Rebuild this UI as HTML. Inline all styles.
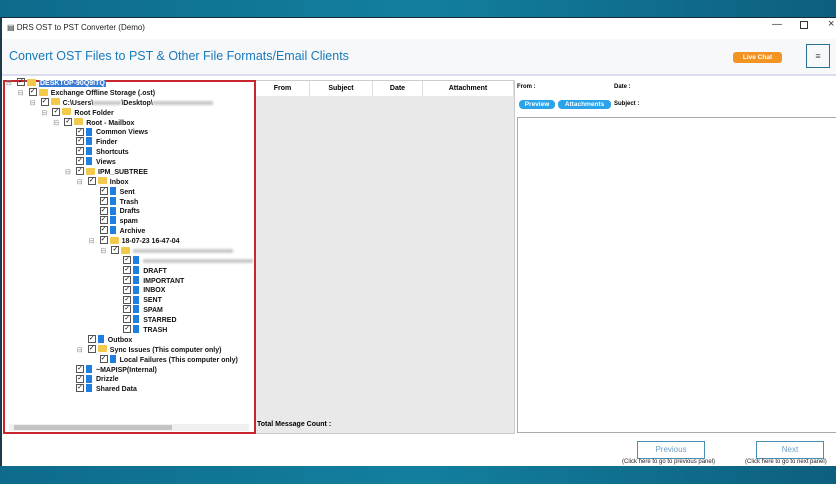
<!DOCTYPE html>
<html><head><meta charset="utf-8"><style>
*{margin:0;padding:0;box-sizing:border-box}
body{width:836px;height:484px;overflow:hidden;position:relative;font-family:"Liberation Sans",sans-serif;background:linear-gradient(90deg,#0e6b8c,#137f9f 50%,#0d5f7e)}
.win{position:absolute;left:0;top:17px;width:836px;height:449px;background:#fff;border-left:2px solid #1b3a4a;border-top:1px solid #1a2b36}
.a{position:absolute}
.row{position:absolute;height:10px;font-size:7px;font-weight:bold;line-height:10px;white-space:nowrap;color:#111}
.cb{display:inline-block;width:8px;height:8px;border:1px solid #555;vertical-align:middle;margin-right:2px;position:relative;top:-1px;font-size:7px;line-height:6px;text-align:center;font-weight:normal}
.fd{display:inline-block;width:9px;height:7px;background:#f3c94a;vertical-align:middle;margin-right:3px;position:relative;top:-1px;border-radius:1px}
.bl{display:inline-block;width:6px;height:8px;background:#1f7fe0;vertical-align:middle;margin-right:4px;position:relative;top:-1px}
.blur{display:inline-block;height:4px;background:#c9c9c9;vertical-align:middle;filter:blur(1px)}
.hd{position:absolute;top:0;height:15px;font-size:7px;font-weight:bold;line-height:15px;text-align:center;border-right:1px solid #ddd}
</style></head><body>
<div class="win">
 <div class="a" style="left:5px;top:5px;font-size:8px;color:#222">&#9636; DRS OST to PST Converter (Demo)</div>
 <div class="a" style="left:770px;top:1px;font-size:10px;color:#333">&#8212;</div>
 <div class="a" style="left:798px;top:3px;width:8px;height:8px;border:1px solid #333"></div>
 <div class="a" style="left:826px;top:0px;font-size:11px;color:#333">×</div>
 <div class="a" style="left:0;top:21px;width:834px;height:37px;background:#f7f8fa;border-bottom:2px solid #dcdcf0"></div>
 <div class="a" style="left:7px;top:31px;font-size:12.5px;color:#1a79b8">Convert OST Files to PST &amp; Other File Formats/Email Clients</div>
 <div class="a" style="left:731px;top:34px;width:49px;height:11px;background:#f39321;border-radius:3px;color:#fff;font-size:6.5px;font-weight:bold;text-align:center;line-height:11px">Live Chat</div>
 <div class="a" style="left:804px;top:26px;width:24px;height:24px;border:1px solid #2d6f93;color:#555;font-size:9px;text-align:center;line-height:22px">≡</div>

 <div class="a" style="left:253px;top:62px;width:260px;height:354px;background:#e9e9e9;border:1px solid #ccc">
  <div class="a" style="left:0;top:0;width:258px;height:15px;background:#fff"></div>
  <div class="hd" style="left:0;width:54px">From</div>
  <div class="hd" style="left:54px;width:63px">Subject</div>
  <div class="hd" style="left:117px;width:50px">Date</div>
  <div class="hd" style="left:167px;width:91px">Attachment</div>
 </div>
 <div class="a" style="left:255px;top:403px;font-size:7px;font-weight:bold">Total Message Count :</div>

 <div class="a" style="left:515px;top:66px;font-size:6px;font-weight:bold">From :</div>
 <div class="a" style="left:612px;top:66px;font-size:6px;font-weight:bold">Date :</div>
 <div class="a" style="left:517px;top:82px;width:36px;height:9px;background:#2aa3e8;border-radius:4px;color:#fff;font-size:6.5px;font-weight:bold;text-align:center;line-height:9px">Preview</div>
 <div class="a" style="left:556px;top:82px;width:53px;height:9px;background:#2aa3e8;border-radius:4px;color:#fff;font-size:6.5px;font-weight:bold;text-align:center;line-height:9px">Attachments</div>
 <div class="a" style="left:612px;top:83px;font-size:6px;font-weight:bold">Subject :</div>
 <div class="a" style="left:515px;top:99px;width:322px;height:316px;border:1px solid #aaa;background:#fff"></div>

 <div class="a" style="left:635px;top:423px;width:68px;height:18px;border:1px solid #4a8db5;color:#6a9fc2;font-size:8px;text-align:center;line-height:16px">Previous</div>
 <div class="a" style="left:620px;top:441px;font-size:6px;color:#222">(Click here to go to previous panel)</div>
 <div class="a" style="left:754px;top:423px;width:68px;height:18px;border:1px solid #4a8db5;color:#6a9fc2;font-size:8px;text-align:center;line-height:16px">Next</div>
 <div class="a" style="left:743px;top:441px;font-size:6px;color:#222">(Click here to go to next panel)</div>

 <div class="a" style="left:1px;top:62px;width:253px;height:354px;border:2px solid #c8262e;background:#fff;overflow:hidden">
  <div class="a" style="left:4px;top:342px;width:240px;height:7px;background:#f0f0f0"></div>
  <div class="a" style="left:9px;top:343px;width:158px;height:5px;background:#c4c4c4"></div>
 </div>
</div>
<div id="tree"></div>
<script>
var R=[[0,"DESKTOP-90Q9ITQ","f",1],[1,"Exchange Offline Storage (.ost)","f"],[2,"C:\\Users\\",'f',0,1],[3,"Root Folder","f"],[4,"Root - Mailbox","f"],[5,"Common Views"],[5,"Finder"],[5,"Shortcuts"],[5,"Views"],[5,"IPM_SUBTREE","f"],[6,"Inbox","f"],[7,"Sent"],[7,"Trash"],[7,"Drafts"],[7,"spam"],[7,"Archive"],[7,"18-07-23 16-47-04","f"],[8,"","f",0,2],[9,"",0,0,3],[9,"DRAFT"],[9,"IMPORTANT"],[9,"INBOX"],[9,"SENT"],[9,"SPAM"],[9,"STARRED"],[9,"TRASH"],[6,"Outbox"],[6,"Sync Issues (This computer only)","f"],[7,"Local Failures (This computer only)"],[5,"~MAPISP(Internal)"],[5,"Drizzle"],[5,"Shared Data"]];
var h="";R.forEach(function(r,i){var y=79+i*9.88,x=17+r[0]*11.8;
var t=r[3]?'<span style="background:#3a7bd5;color:#fff;padding:0 1px">'+r[1]+'</span>':r[1];
if(r[4]==1)t+='<span class="blur" style="width:28px"></span>\\Desktop\\<span class="blur" style="width:60px"></span>';
if(r[4]==2)t='<span class="blur" style="width:100px"></span>';
if(r[4]==3)t='<span class="blur" style="width:110px"></span>';
h+='<div class="row" style="left:'+(x-11)+'px;top:'+y+'px"><span style="display:inline-block;width:11px;color:#888;font-weight:normal">'+(r[2]?'⊟':'')+'</span><span class="cb">✓</span><span class="'+(r[2]?'fd':'bl')+'"></span>'+t+'</div>';});
document.getElementById('tree').innerHTML=h;
</script>
</body></html>
